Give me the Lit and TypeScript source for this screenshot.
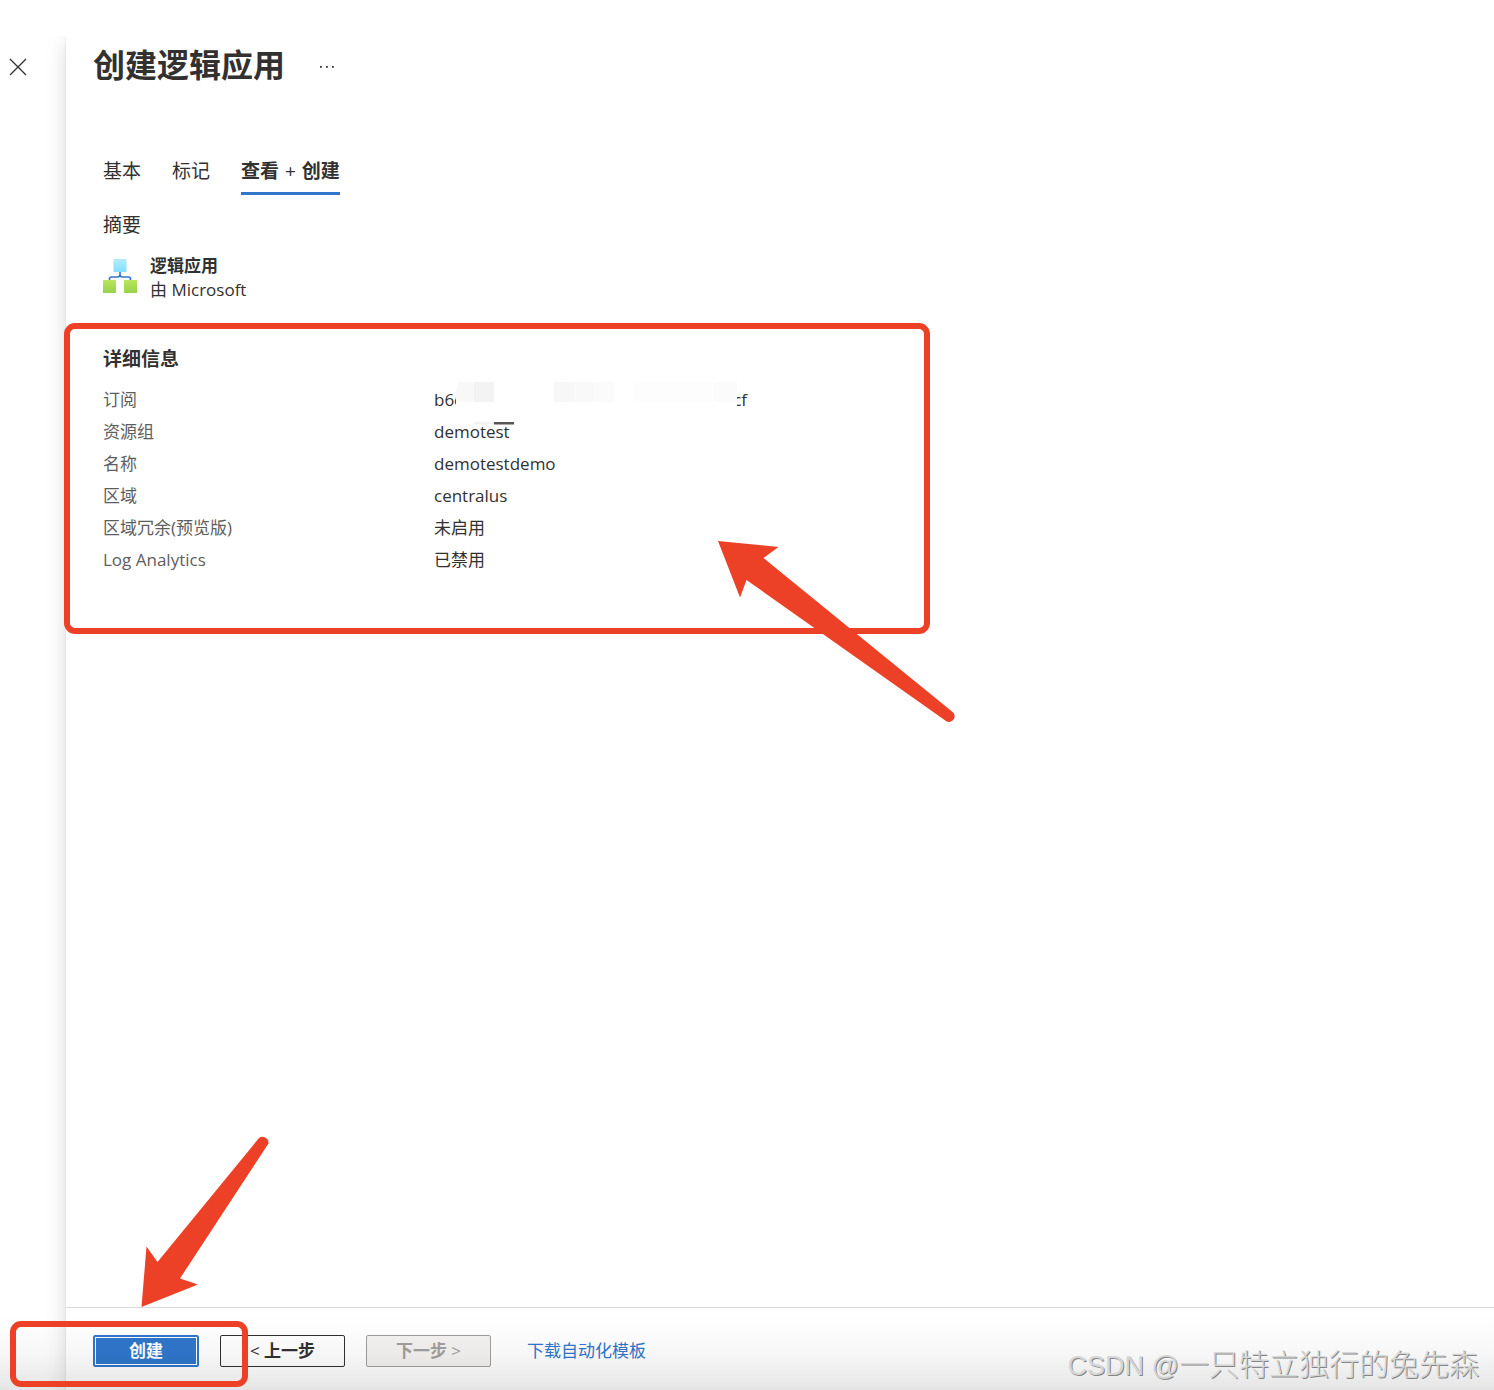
import { LitElement, html, css } from "lit";
import { customElement, state } from "lit/decorators.js";

interface Detail {
  label: string;
  value: string;
}

@customElement("app-root")
export class AppRoot extends LitElement {
  static styles = css`
    :host {
      display: block;
      font-family: "Open Sans", "Noto Sans CJK SC", sans-serif;
      font-size: 17px;
      line-height: 24px;
      color: #323130;
    }
    * {
      box-sizing: border-box;
    }
    button {
      font: inherit;
      color: inherit;
      background: none;
      border: 0;
      padding: 0;
      cursor: pointer;
    }
    .page {
      position: relative;
      min-height: 100vh;
      display: flex;
      padding-top: 36px;
      background: #fff;
      overflow: hidden;
    }
    .shell {
      flex: 1;
      display: flex;
      clip-path: inset(0);
    }
    .rail {
      width: 66px;
      flex: none;
      padding: 22px 9px;
    }
    .close {
      display: block;
      width: 18px;
      height: 18px;
    }
    .close svg,
    .more svg {
      display: block;
    }
    .panel {
      flex: 1;
      min-width: 0;
      display: flex;
      flex-direction: column;
      background: #fff;
      box-shadow: 0 0 2px rgba(0, 0, 0, 0.1), 0 6px 20px rgba(0, 0, 0, 0.15);
    }
    .content {
      flex: 1;
      padding: 9px 38px 40px 37px;
    }
    .title-row {
      display: flex;
      align-items: center;
      gap: 34px;
      margin-left: -10px;
    }
    h1 {
      margin: 0;
      font-size: 32px;
      line-height: 40px;
      font-weight: 700;
    }
    .more {
      padding-top: 4px;
    }
    .tabs {
      display: flex;
      gap: 31px;
      margin-top: 74px;
      font-size: 19px;
    }
    .tab {
      line-height: 24px;
      padding-bottom: 9px;
      border-bottom: 3px solid transparent;
      white-space: nowrap;
    }
    .tab.active {
      font-weight: 700;
      border-bottom-color: #2f76cb;
    }
    .plus {
      font-weight: 400;
      margin: 0 1px;
    }
    h2,
    h3 {
      margin: 0;
      font-size: 19px;
      line-height: 24px;
    }
    h2 {
      margin-top: 18px;
      font-weight: 400;
    }
    h3 {
      margin-top: 45px;
      font-weight: 700;
    }
    .product {
      display: flex;
      gap: 13px;
      margin-top: 17px;
    }
    .product svg {
      margin-top: 5px;
    }
    .name {
      font-weight: 700;
    }
    dl {
      margin: 13px 0 0;
      line-height: 32px;
    }
    .row {
      display: grid;
      grid-template-columns: 331px 1fr;
    }
    dt {
      color: #605e5c;
    }
    dd {
      margin: 0;
      position: relative;
    }
    .id {
      display: flex;
      width: 313px;
      justify-content: space-between;
    }
    .mask {
      position: absolute;
      left: 20px;
      top: -2px;
      z-index: 1;
    }
    .footer {
      display: flex;
      align-items: flex-start;
      gap: 21px;
      height: 83px;
      padding: 27px 27px 0;
      border-top: 1px solid #dcdcdc;
    }
    .btn {
      height: 32px;
      width: 125px;
      line-height: 28px;
      border: 1px solid #323130;
      border-radius: 2px;
      font-weight: 700;
    }
    .light {
      font-weight: 400;
    }
    .btn.primary {
      width: 106px;
      color: #fff;
      background: #2f76cb;
      border-color: #2f76cb;
      box-shadow: inset 0 0 0 1px #2f76cb, inset 0 0 0 2px #fff;
    }
    .btn:disabled {
      color: #a19f9d;
      background: #f3f2f1;
      border-color: #a19f9d;
      cursor: default;
    }
    .link {
      margin-left: 15px;
      line-height: 32px;
      color: #2f76cb;
      text-decoration: none;
    }
    .shade {
      position: absolute;
      left: 0;
      right: 0;
      bottom: 0;
      height: 74px;
      background: linear-gradient(rgba(0, 0, 0, 0), rgba(0, 0, 0, 0.03) 50%, rgba(0, 0, 0, 0.1));
      pointer-events: none;
    }
    .watermark {
      position: absolute;
      right: 15px;
      bottom: 4px;
      font-family: "Noto Sans CJK SC", sans-serif;
      font-size: 30px;
      font-weight: 300;
      line-height: 40px;
      color: #d6d6d6;
      text-shadow: 1px 1px 0 #858585;
      pointer-events: none;
    }
    .brand {
      font-family: "Liberation Sans", sans-serif;
      font-size: 27px;
    }
    .frame {
      position: absolute;
      border: 6px solid #ec4127;
      border-radius: 11px;
      pointer-events: none;
    }
    .frame-details {
      left: 64px;
      top: 323px;
      width: 866px;
      height: 311px;
    }
    .frame-create {
      left: 10px;
      bottom: 3px;
      width: 238px;
      height: 66px;
    }
    .arrow {
      position: absolute;
      fill: #ec4127;
      pointer-events: none;
    }
    .arrow-details {
      left: 710px;
      top: 530px;
    }
    .arrow-create {
      left: 130px;
      bottom: 80px;
    }
  `;

  @state() private tab = 2;

  private tabs = [
    html`基本`,
    html`标记`,
    html`查看 <span class="plus">+</span> 创建`,
  ];

  private details: Detail[] = [
    { label: "资源组", value: "demotest" },
    { label: "名称", value: "demotestdemo" },
    { label: "区域", value: "centralus" },
    { label: "区域冗余(预览版)", value: "未启用" },
    { label: "Log Analytics", value: "已禁用" },
  ];

  private renderMask() {
    return html`<svg class="mask" width="284" height="44" viewBox="0 0 284 44" aria-hidden="true">
      <path d="M5 0H283V26H2V10Z" fill="#fff" />
      <path d="M5 0H20V20H2V10Q2 4 5 0Z" fill="#f8f8f8" />
      <path d="M20 0H40V20H20Z" fill="#f3f3f3" />
      <path d="M100 0H120V20H100Z" fill="#f7f7f7" />
      <path d="M120 0H140V20H120Z" fill="#f9f9f9" />
      <path d="M140 0H160V20H140Z" fill="#fbfbfb" />
      <path d="M180 0H283V20H180Z" fill="#fdfdfd" />
      <path d="M260 0H283V20H260Z" fill="#fbfbfb" />
      <path d="M20 40H40V42H20Z" fill="#f2f2f2" />
      <path d="M40 40H60V42.500H40Z" fill="#555" />
    </svg>`;
  }

  render() {
    return html`
      <div class="page">
        <div class="shell">
          <div class="rail">
            <button class="close" aria-label="关闭">
              <svg width="18" height="18" viewBox="0 0 18 18" fill="none" stroke="#323130" stroke-width="1.300">
                <path d="M1 1L17 17M17 1L1 17" />
              </svg>
            </button>
          </div>
          <main class="panel">
            <div class="content">
              <div class="title-row">
                <h1>创建逻辑应用</h1>
                <button class="more" aria-label="更多">
                  <svg width="16" height="4" viewBox="0 0 16 4" fill="#323130">
                    <path d="M1 1h1.800v1.800h-1.800zM7 1h1.800v1.800h-1.800zM13 1h1.800v1.800h-1.800z" />
                  </svg>
                </button>
              </div>
              <div class="tabs" role="tablist">
                ${this.tabs.map(
                  (label, i) => html`<button
                    class="tab ${i === this.tab ? "active" : ""}"
                    role="tab"
                    aria-selected=${i === this.tab ? "true" : "false"}
                    @click=${() => (this.tab = i)}
                  >${label}</button>`
                )}
              </div>
              <h2>摘要</h2>
              <div class="product">
                <svg width="34" height="34" viewBox="0 0 34 34" aria-hidden="true">
                  <defs>
                    <linearGradient id="sky" x1="0" y1="0" x2="0" y2="1">
                      <stop offset="0" stop-color="#b4ecfc" />
                      <stop offset="1" stop-color="#83e0fb" />
                    </linearGradient>
                    <linearGradient id="leaf" x1="0" y1="0" x2="0" y2="1">
                      <stop offset="0" stop-color="#b9e65c" />
                      <stop offset="1" stop-color="#98d24b" />
                    </linearGradient>
                  </defs>
                  <path
                    d="M17 12V15.500Q17 18 14.500 18H8.500Q6.500 18 6.500 20V22M17 15.500Q17 18 19.500 18H25.500Q27.500 18 27.500 20V22"
                    fill="none" stroke="#2f76cb" stroke-width="1.600" />
                  <rect x="10.500" y="0" width="13" height="13" rx="0.500" fill="url(#sky)" />
                  <rect x="0" y="21" width="13" height="13" rx="0.500" fill="url(#leaf)" />
                  <rect x="21" y="21" width="13" height="13" rx="0.500" fill="url(#leaf)" />
                </svg>
                <div>
                  <div class="name">逻辑应用</div>
                  <div>由 Microsoft</div>
                </div>
              </div>
              <h3>详细信息</h3>
              <dl>
                <div class="row">
                  <dt>订阅</dt>
                  <dd>
                    <div class="id"><span>b6c</span><span>cf</span></div>
                    ${this.renderMask()}
                  </dd>
                </div>
                ${this.details.map(
                  (d) => html`<div class="row"><dt>${d.label}</dt><dd>${d.value}</dd></div>`
                )}
              </dl>
            </div>
            <div class="footer">
              <button class="btn primary">创建</button>
              <button class="btn"><span class="light">&lt;</span> 上一步</button>
              <button class="btn" disabled>下一步 <span class="light">&gt;</span></button>
              <a class="link" href="#template">下载自动化模板</a>
            </div>
          </main>
        </div>
        <div class="shade"></div>
        <div class="watermark"><span class="brand">CSDN @</span>一只特立独行的兔先森</div>
        <div class="frame frame-details"></div>
        <div class="frame frame-create"></div>
        <svg class="arrow arrow-details" width="250" height="200" viewBox="710 530 250 200" aria-hidden="true">
          <path d="M718 541L778.500 547L763.500 558L952 711.500A5.500 5.500 0 0 1 946 721L746.500 580L740 597.500Z" />
        </svg>
        <svg class="arrow arrow-create" width="150" height="180" viewBox="130 1130 150 180" aria-hidden="true">
          <path d="M141.500 1307L146.500 1246.500L157.500 1262L259 1138A6 6 0 0 1 268.500 1143.500L180 1278.500L198 1284.500Z" />
        </svg>
      </div>
    `;
  }
}
